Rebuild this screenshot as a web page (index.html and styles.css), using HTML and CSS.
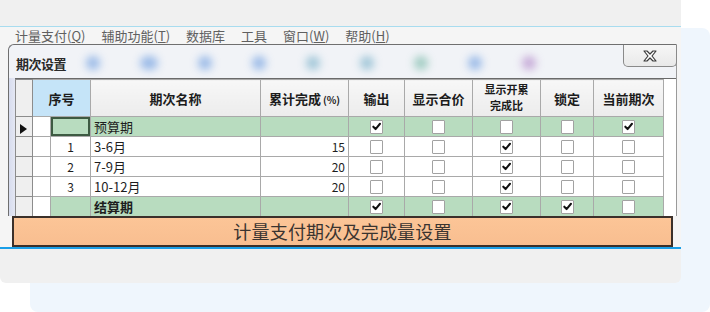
FILE: index.html
```html
<!DOCTYPE html>
<html lang="zh-CN">
<head>
    <meta charset="UTF-8">
    <meta name="viewport" content="width=device-width, initial-scale=1.0">
    <title>期次设置</title>
    <link rel="stylesheet" href="styles.css">
</head>
<body>

<div class="stage">
    <div class="backdrop"></div>

    <div class="card">
        <div class="shot">
            <!-- Menu bar of the host window -->
            <div class="menubar">
                <span>计量支付(<u>Q</u>)</span>
                <span>辅助功能(<u>T</u>)</span>
                <span>数据库</span>
                <span>工具</span>
                <span>窗口(<u>W</u>)</span>
                <span>帮助(<u>H</u>)</span>
            </div>

            <div class="dialog">
                <div class="titlebar">
                    <span class="title">期次设置</span>
                    <div class="blobs">
                        <i class="blob blue"></i>
                        <i class="blob blue wide"></i>
                        <i class="blob blue"></i>
                        <i class="blob blue"></i>
                        <i class="blob teal"></i>
                        <i class="blob teal"></i>
                        <i class="blob green"></i>
                        <i class="blob blue"></i>
                        <i class="blob purple"></i>
                    </div>
                    <button class="close">
                        <svg width="16" height="12" viewBox="0 0 16 12">
                            <path d="M2 1 L5 1 L8 4 L11 1 L14 1 L10 6 L14 11 L11 11 L8 8 L5 11 L2 11 L6 6 Z" fill="#fff" stroke="#3a3a3a" stroke-width="1.2" stroke-linejoin="round"/>
                        </svg>
                    </button>
                </div>

                <div class="grid-wrap">
                    <table class="grid">
                        <colgroup>
                            <col class="c-sel">
                            <col class="c-pad">
                            <col class="c-no">
                            <col class="c-name">
                            <col class="c-total">
                            <col class="c-out">
                            <col class="c-price">
                            <col class="c-ratio">
                            <col class="c-lock">
                            <col class="c-cur">
                        </colgroup>
                        <thead>
                            <tr>
                                <th class="sel"></th>
                                <th class="no-head" colspan="2">序号</th>
                                <th>期次名称</th>
                                <th>累计完成<small>(%)</small></th>
                                <th>输出</th>
                                <th>显示合价</th>
                                <th class="two-line"><span>显示开累</span><span>完成比</span></th>
                                <th>锁定</th>
                                <th>当前期次</th>
                            </tr>
                        </thead>
                        <tbody>
                            <tr class="green">
                                <td class="sel"><span class="arrow"></span></td>
                                <td class="pad"></td>
                                <td class="no focus"></td>
                                <td class="name">预算期</td>
                                <td class="num"></td>
                                <td class="chk"><span class="box on"><svg viewBox="0 0 12 12"><path d="M2.5 6.2 L5 8.8 L9.8 3" /></svg></span></td>
                                <td class="chk"><span class="box"></span></td>
                                <td class="chk"><span class="box"></span></td>
                                <td class="chk"><span class="box"></span></td>
                                <td class="chk"><span class="box on"><svg viewBox="0 0 12 12"><path d="M2.5 6.2 L5 8.8 L9.8 3" /></svg></span></td>
                            </tr>
                            <tr>
                                <td class="sel"></td>
                                <td class="pad"></td>
                                <td class="no">1</td>
                                <td class="name">3-6月</td>
                                <td class="num">15</td>
                                <td class="chk"><span class="box"></span></td>
                                <td class="chk"><span class="box"></span></td>
                                <td class="chk"><span class="box on"><svg viewBox="0 0 12 12"><path d="M2.5 6.2 L5 8.8 L9.8 3" /></svg></span></td>
                                <td class="chk"><span class="box"></span></td>
                                <td class="chk"><span class="box"></span></td>
                            </tr>
                            <tr>
                                <td class="sel"></td>
                                <td class="pad"></td>
                                <td class="no">2</td>
                                <td class="name">7-9月</td>
                                <td class="num">20</td>
                                <td class="chk"><span class="box"></span></td>
                                <td class="chk"><span class="box"></span></td>
                                <td class="chk"><span class="box on"><svg viewBox="0 0 12 12"><path d="M2.5 6.2 L5 8.8 L9.8 3" /></svg></span></td>
                                <td class="chk"><span class="box"></span></td>
                                <td class="chk"><span class="box"></span></td>
                            </tr>
                            <tr>
                                <td class="sel"></td>
                                <td class="pad"></td>
                                <td class="no">3</td>
                                <td class="name">10-12月</td>
                                <td class="num">20</td>
                                <td class="chk"><span class="box"></span></td>
                                <td class="chk"><span class="box"></span></td>
                                <td class="chk"><span class="box on"><svg viewBox="0 0 12 12"><path d="M2.5 6.2 L5 8.8 L9.8 3" /></svg></span></td>
                                <td class="chk"><span class="box"></span></td>
                                <td class="chk"><span class="box"></span></td>
                            </tr>
                            <tr class="green">
                                <td class="sel"></td>
                                <td class="pad"></td>
                                <td class="no"></td>
                                <td class="name bold">结算期</td>
                                <td class="num"></td>
                                <td class="chk"><span class="box on"><svg viewBox="0 0 12 12"><path d="M2.5 6.2 L5 8.8 L9.8 3" /></svg></span></td>
                                <td class="chk"><span class="box"></span></td>
                                <td class="chk"><span class="box on"><svg viewBox="0 0 12 12"><path d="M2.5 6.2 L5 8.8 L9.8 3" /></svg></span></td>
                                <td class="chk"><span class="box on"><svg viewBox="0 0 12 12"><path d="M2.5 6.2 L5 8.8 L9.8 3" /></svg></span></td>
                                <td class="chk"><span class="box"></span></td>
                            </tr>
                        </tbody>
                    </table>
                </div>
            </div>

            <!-- Caption bar over the screenshot -->
            <div class="banner">计量支付期次及完成量设置</div>
        </div>
    </div>
</div>

</body>
</html>
```

FILE: styles.css
```css
/* Page */
body {
    margin: 0;
    background: #ffffff;
    font-family: "Noto Sans CJK SC", "Noto Sans", sans-serif;
    overflow: hidden;
}

.stage {
    display: grid;
    width: 710px;
    height: 312px;
}

.backdrop,
.card {
    grid-area: 1 / 1;
}

/* Light blue panel behind the card */
.backdrop {
    margin: 28px 0 0 30px;
    background: #eff6fd;
    border-radius: 8px;
}

.card {
    width: 681px;
    height: 283px;
    box-sizing: border-box;
    padding-top: 26px;
    background: #f0f0f0;
    border-radius: 0 0 6px 6px;
}

.shot {
    background: #f5f5f5;
    border-top: 1px solid #a8dcef;
    border-bottom: 2px solid #1a9fe8;
}

/* Menu bar */
.menubar {
    height: 17px;
    display: flex;
    align-items: center;
    gap: 16px;
    padding-left: 15px;
    font-size: 13px;
    color: #606060;
    white-space: nowrap;
}

.menubar u {
    text-underline-offset: 1px;
}

/* Dialog */
.dialog {
    margin-left: 8px;
    width: 669px;
    box-sizing: border-box;
    border-top: 1px solid #6f6f6f;
    border-left: 1px solid #6f6f6f;
    border-right: 1px solid #9a9a9a;
    border-top-left-radius: 6px;
    background: linear-gradient(90deg, #d7dcee 0, #e4e7f3 6px, #f1f3f7 6px);
}

.titlebar {
    height: 33px;
    display: flex;
    align-items: flex-start;
    background: #f1f3f7;
    border-top-left-radius: 6px;
}

.title {
    margin: 9px 0 0 7px;
    font-size: 13px;
    font-weight: 700;
    color: #2a2a2a;
    letter-spacing: -0.5px;
}

.blobs {
    display: flex;
    gap: 40px;
    margin: 11px 0 0 20px;
}

.blob {
    width: 14px;
    height: 14px;
    border-radius: 50%;
    filter: blur(4px);
    opacity: 0.5;
}

.blob.wide {
    width: 18px;
}

.blob.blue { background: #3f7fd8; }
.blob.teal { background: #4c98b8; }
.blob.green { background: #4aa38a; }
.blob.purple { background: #9a5fb8; }

.close {
    margin-left: auto;
    margin-right: -1px;
    width: 54px;
    height: 22px;
    padding: 0;
    display: flex;
    align-items: center;
    justify-content: center;
    background: linear-gradient(#f6f6f6, #e9e9e9);
    border: 1px solid #8a8a8a;
    border-top: none;
    border-radius: 0 0 5px 5px;
}

/* Data grid */
.grid-wrap {
    margin-left: 6px;
    height: 138px;
    background: #ffffff;
    border-top: 1px solid #6a6a6a;
    box-sizing: border-box;
}

.grid {
    width: 648px;
    table-layout: fixed;
    border-collapse: collapse;
    font-size: 12px;
    color: #1e1e1e;
}

.c-sel { width: 17px; }
.c-pad { width: 18px; }
.c-no { width: 40px; }
.c-name { width: 170px; }
.c-total { width: 88px; }
.c-out { width: 56px; }
.c-price { width: 68px; }
.c-ratio { width: 68px; }
.c-lock { width: 53px; }
.c-cur { width: 70px; }

.grid th,
.grid td {
    border: 1px solid #a9a9a9;
    padding: 0;
    overflow: hidden;
    white-space: nowrap;
}

.grid th {
    height: 35px;
    background: linear-gradient(#f7f7f7, #ececec);
    font-size: 13px;
    font-weight: 700;
    color: #1c1c1c;
    text-align: center;
}

.grid th small {
    font-size: 10px;
    margin-left: 2px;
}

.grid th.two-line {
    font-size: 11px;
    vertical-align: top;
    padding-top: 1px;
}

.grid th.two-line span {
    display: block;
    height: 16px;
    line-height: 16px;
}

.grid th.no-head {
    background: #c5e4f8;
}

.grid td {
    height: 19px;
    background: #ffffff;
}

.grid .sel {
    background: #efefef;
    border-color: #8c8c8c;
}

.grid tr.green td {
    background: #b8dcbf;
}

.grid tr.green td.sel {
    background: #efefef;
}

.grid tr.green td.pad {
    background: #ffffff;
}

.grid td.no {
    text-align: center;
}

.grid td.focus {
    box-shadow: inset 0 0 0 2px #3d5a42;
}

.grid td.name {
    padding-left: 3px;
    font-size: 13px;
}

.grid td.name.bold {
    font-weight: 700;
}

.grid td.num {
    text-align: right;
    padding-right: 3px;
}

.grid td.chk {
    text-align: center;
    line-height: 0;
}

.arrow {
    display: inline-block;
    margin-left: 4px;
    border-left: 7px solid #111;
    border-top: 5px solid transparent;
    border-bottom: 5px solid transparent;
    vertical-align: middle;
}

.box {
    display: inline-block;
    width: 13px;
    height: 14px;
    box-sizing: border-box;
    background: #ffffff;
    border: 1px solid #a2a2a2;
    border-radius: 1px;
}

.box svg {
    width: 11px;
    height: 11px;
}

.box svg path {
    fill: none;
    stroke: #111;
    stroke-width: 2.2;
    stroke-linecap: round;
    stroke-linejoin: round;
}

/* Caption */
.banner {
    height: 31px;
    margin: 0 8px 0 12px;
    box-sizing: border-box;
    border: 2px solid #3b302a;
    background: linear-gradient(#fcc597, #f8be90);
    font-size: 18px;
    line-height: 27px;
    color: #3a3430;
    text-align: center;
    letter-spacing: 0.2px;
}
```
